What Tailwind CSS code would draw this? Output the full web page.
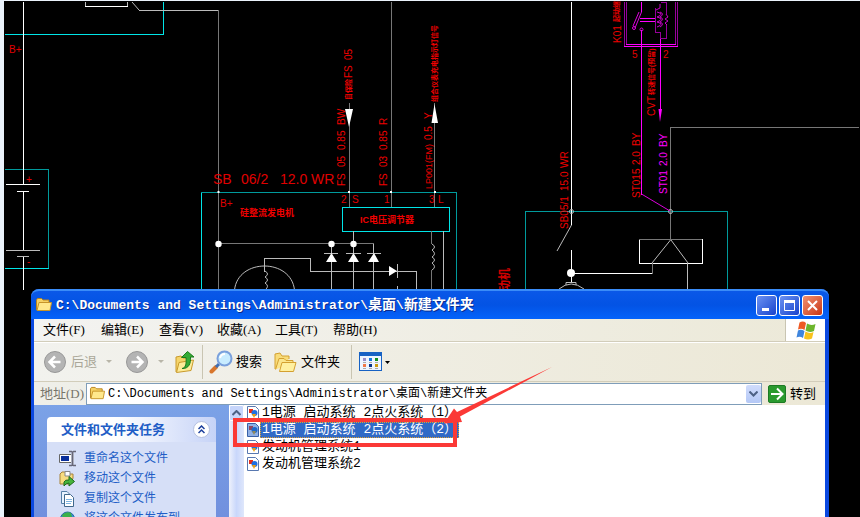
<!DOCTYPE html>
<html lang="zh-CN">
<head>
<meta charset="utf-8">
<title>新建文件夹</title>
<script src="https://cdn.jsdelivr.net/npm/@tailwindcss/browser@4"></script>
</head>
<body class="bg-[#eaf2fb]">
<main class="relative h-screen overflow-hidden font-['Liberation_Serif','Noto_Sans_CJK_SC',serif]">

<!-- Wiring diagram -->
<div class="h-full pl-1 pt-px"><div class="h-full bg-black"></div></div>
<svg class="absolute left-0 top-0 font-['Liberation_Sans','Noto_Sans_CJK_SC',sans-serif]" width="860" height="517" viewBox="0 0 860 517" fill="none" aria-label="电路图">
  <g shape-rendering="crispEdges">
    <g stroke="#00e5e8"><path d="M5 34.500H163.500V2M5 268.500H48.500M201.500 289V192.500M342.500 207.500H449.500V231.500H342.500Z"/></g>
    <g stroke="#009a9c"><path d="M5 169.500H48.500V268M201 192.500H456.500V289M525.500 289V211.500H727.500V289"/></g>
    <g stroke="#fff"><path d="M23.500 2V184M6 184.500H40M17 191.500H29M23.500 191V250M23.500 257V290M85 6.500H128M571.500 2V225M571.500 250V283M571 273.500H652M639.500 239.500H702.500V263.500H639.500Z"/></g>
    <g stroke="#bbb"><path d="M6 250.500H40M17 256.500H29M85.500 2V6M127.500 2V6M139 10.500H218M353.500 231V289M331.500 243V289M373.500 243V289M264.500 272V258.500H310.500V271.500H416.500V289M443.500 231V289M397.500 264V278M324 253.500H338M346 253.500H361M367 253.500H381M687.500 263V290M397.500 286V289"/></g>
    <g stroke="#777"><path d="M218.500 10V289M218 243.500H374M391.500 2V207M349.500 103V207M434.500 103V207M431.500 231V244M431.500 270V289M670.500 239V127.500H859M652.500 263V274M639 239.500H702"/></g>
    <g stroke="#f0f"><path d="M641.500 30V195M660.500 38V110M624 46.500H678M626 44.500H676M641.500 2V12M640 18.500H655M640 21.500H655"/></g>
    <g stroke="#96009a"><path d="M624.500 2V46M677.500 2V46M626.500 2V44M675.500 2V44M660.500 2.500H666.500V14M666.500 25V38.500H660M655.500 8V32H660V38"/></g>
  </g>
  <g stroke="#bbb">
    <path d="M132 2L139 10M571.500 225L557 251M670.500 240L652 263M671 240L688 263"/>
    <path d="M234.500 290C238 258 291 258 294.500 290M265 271q5 3 0 6q5 3 0 6q5 3 0 7M432 244q5 3 0 6q5 4 0 7q5 3 0 6q5 4 0 7M559 289Q571 279 584 289M566 285V282.500H576V285"/>
    <circle cx="571.500" cy="211.500" r="2"/><circle cx="670.500" cy="211.500" r="2"/>
  </g>
  <path d="M641.500 194L670 211M641.500 12L635 28M639 12L633 26" stroke="#d0d"/>
  <circle cx="634" cy="28" r="1.500" stroke="#d0d"/><circle cx="641.500" cy="29.500" r="1.500" stroke="#d0d"/>
  <path d="M660 4V8L656 10M657 12q8 2 0 5q8 2 0 5q8 2 0 5M660 12q5 2 0 5q5 2 0 5q5 2 0 5M666 14l2 3-3 2 3 2-3 2 2 2" stroke="#c0c"/>
  <path d="M658.500 109H662L660 122Z" fill="#f0f"/>
  <g fill="#fff">
    <circle cx="218.500" cy="244" r="3.200"/><circle cx="331.500" cy="244" r="3.200"/><circle cx="353.500" cy="244" r="3.200"/><circle cx="571" cy="273" r="4"/>
    <path d="M345 109H353L349 127ZM434.500 104L438 123H431.500ZM331.500 253L337 262H326ZM353.500 253L359 262H348ZM374 253L379 262H368ZM389 266L397 271L389 276Z"/>
    <path d="M217.500 191h2v2h-2zM348 191h2v2h-2zM390 191h2v2h-2zM434 191h2v2h-2z"/>
  </g>
  <g fill="#e00000" class="text-[14px]">
    <text x="213" y="184">SB</text><text x="241" y="184">06/2</text><text x="280" y="184">12.0</text><text x="311" y="184">WR</text>
  </g>
  <g fill="#e00000" class="text-[10px]">
    <text x="9" y="53">B+</text><text x="220" y="207">B+</text><text x="341" y="203">2</text><text x="352" y="203">S</text><text x="384" y="203">1</text><text x="429" y="203">3</text><text x="438" y="203">L</text><text x="26" y="183">+</text><text x="27" y="265">-</text>
    <text x="632" y="58">5</text><text x="663" y="58">2</text>
  </g>
  <g fill="#f00000" class="text-[9px] font-bold"><text x="240" y="216">硅整流发电机</text><text x="360" y="223">IC电压调节器</text></g>
  <g fill="#f00000" class="text-[10px]">
    <text transform="translate(345 186) rotate(-90)">FS</text><text transform="translate(345 167) rotate(-90)">05</text><text transform="translate(345 150) rotate(-90)">0.85</text><text transform="translate(345 125) rotate(-90)">BW</text>
    <text transform="translate(387 186) rotate(-90)">FS</text><text transform="translate(387 167) rotate(-90)">03</text><text transform="translate(387 150) rotate(-90)">0.85</text><text transform="translate(387 125) rotate(-90)">R</text>
    <text transform="translate(432 189) rotate(-90)" class="text-[9px]">LP001(FM)</text><text transform="translate(432 140) rotate(-90)">0.5</text><text transform="translate(432 119) rotate(-90)">Y</text>
    <text transform="translate(352 78) rotate(-90)">FS</text><text transform="translate(352 60) rotate(-90)">05</text>
    <text transform="translate(568 229) rotate(-90)">SB05/1</text><text transform="translate(568 191) rotate(-90)">15.0</text><text transform="translate(568 168) rotate(-90)">WR</text>
    <text transform="translate(640 198) rotate(-90)">ST015</text><text transform="translate(640 165) rotate(-90)">2.0</text><text transform="translate(640 146) rotate(-90)">BY</text>
    <text transform="translate(621 43) rotate(-90)">K01</text><text transform="translate(655 116) rotate(-90)">CVT</text>
  </g>
  <g fill="#f0f" class="text-[10px]">
    <text transform="translate(667 194) rotate(-90)">ST01</text><text transform="translate(667 166) rotate(-90)">2.0</text><text transform="translate(667 147) rotate(-90)">BY</text>
  </g>
  <g fill="#f00000" class="text-[7px] font-bold">
    <text transform="translate(351 100) rotate(-90)">自保险</text>
    <text transform="translate(437 102) rotate(-90)">组合仪表充电指示灯信号</text>
    <text transform="translate(654 95) rotate(-90)">转速信号(预留)</text>
    <text transform="translate(619 22) rotate(-90)">起动继</text>
  </g>
  <text transform="translate(509 304) rotate(-90)" fill="#d00000" class="text-[12px] font-bold">起动机</text>
</svg>

<!-- Explorer window -->
<section class="absolute inset-x-[31px] top-[289px] bottom-0 flex flex-col rounded-t-lg bg-[#0a48e0] pl-[3px] pr-1">
  <header class="-ml-[3px] -mr-1 flex h-[30px] shrink-0 items-center gap-[3px] rounded-t-lg bg-linear-to-b from-[#0a58e8] via-[#0353e4] to-[#0463fb] border-t-2 border-[#3a8cf8] pl-1 pr-1.5 text-white">
    <svg width="18" height="16" viewBox="0 0 18 16" aria-hidden="true"><path d="M1.500 13V3l1-1.500h4L8 3h6v3" fill="#f6d264" stroke="#b8831c"/><path d="M2 13.500L4 5.500h12.500L15 13.500Z" fill="#ffe88c" stroke="#c6942a"/></svg>
    <h1 class="flex-1 whitespace-nowrap font-['Liberation_Mono','Noto_Sans_CJK_SC',monospace] text-[13px] font-bold [text-shadow:1px_1px_#0a2b8c]">C:\Documents and Settings\Administrator\<span class="text-[14px]">桌面</span>\<span class="text-[14px]">新建文件夹</span></h1>
    <div class="flex gap-0.5">
      <button aria-label="最小化" class="grid size-[21px] place-items-center rounded-[3px] border border-white bg-linear-to-br from-[#6d92f2] to-[#1941cc]"><svg width="17" height="17"><path d="M4 12.500H11" stroke="#fff" stroke-width="3"/></svg></button>
      <button aria-label="最大化" class="grid size-[21px] place-items-center rounded-[3px] border border-white bg-linear-to-br from-[#6d92f2] to-[#1941cc]"><svg width="17" height="17" fill="none" stroke="#fff"><path d="M3.500 4V13.500H13.500V4"/><path d="M3 4.500H14" stroke-width="3"/></svg></button>
      <button aria-label="关闭" class="grid size-[21px] place-items-center rounded-[3px] border border-white bg-linear-to-br from-[#f09070] to-[#c8320c]"><svg width="17" height="17"><path d="M4 4L13 13M13 4L4 13" stroke="#fff" stroke-width="2"/></svg></button>
    </div>
  </header>

  <nav class="flex h-[23px] shrink-0 border-b border-[#d2cdba] bg-linear-to-r from-[#f3f3f1] to-[#ece9d8] text-[13px] text-black" aria-label="菜单">
    <div class="flex flex-1 items-center gap-4 whitespace-nowrap pl-[9px]">
      <button class="w-[42px] text-left">文件(F)</button><button class="w-[42px] text-left">编辑(E)</button><button class="w-[42px] text-left">查看(V)</button><button class="w-[42px] text-left">收藏(A)</button><button class="w-[42px] text-left">工具(T)</button><button class="w-[42px] text-left">帮助(H)</button>
    </div>
    <div class="grid w-10 place-items-center border-l border-[#c9c5b2] bg-white">
      <svg width="20" height="19" viewBox="0 0 20 19" aria-hidden="true"><path d="M3.500 1.500Q7-.5 10 2L8.500 9Q5.500 7 2 8.500Z" fill="#ee5a24"/><path d="M11 2.500Q15 5 19.500 3L18 10Q13.500 12 9.500 9.500Z" fill="#6cb52d"/><path d="M2 9.500Q5 8 8.500 10L7 17Q4 15 .5 16.500Z" fill="#3f85dd"/><path d="M9.500 10.500Q13.500 13 17.500 11L16 17.500Q12 19.500 8 17.500Z" fill="#f8c21c"/></svg>
    </div>
  </nav>

  <div class="flex h-10 shrink-0 items-center border-y border-t-white border-b-[#d2cdba] bg-linear-to-r from-[#f2f2ee] to-[#ece8d6] text-[13px]" role="toolbar" aria-label="工具栏">
    <button class="ml-[9px] flex items-center gap-1 text-[#aaa799]" disabled>
      <svg width="24" height="24" viewBox="0 0 24 24" fill="none"><circle cx="12" cy="12" r="10.500" fill="#b4b4b4" stroke="#989898"/><path d="M17.500 12H7M12 6.500L6.500 12L12 17.500" stroke="#fff" stroke-width="2.500"/></svg>
      后退
    </button>
    <svg class="ml-[9px]" width="6" height="4" aria-hidden="true"><path d="M0 0H6L3 3Z" fill="#b8b5a8"/></svg>
    <button class="ml-[13px]" aria-label="前进" disabled><svg width="24" height="24" viewBox="0 0 24 24" fill="none"><circle cx="12" cy="12" r="10.500" fill="#b4b4b4" stroke="#989898"/><path d="M6.500 12H17M12 6.500L17.500 12L12 17.500" stroke="#fff" stroke-width="2.500"/></svg></button>
    <svg class="ml-[9px]" width="6" height="4" aria-hidden="true"><path d="M0 0H6L3 3Z" fill="#b8b5a8"/></svg>
    <button class="ml-[11px]" aria-label="向上"><svg width="20" height="23" viewBox="0 0 20 23"><path d="M1 21V6l5-1 2 2h6v5" fill="#f5d56a" stroke="#c99a2c"/><path d="M1.500 21.500L4 11.500L18.500 9L16 19.500Z" fill="#fdeb98" stroke="#c99a2c"/><path d="M7 17.500C11 17 11.500 12 11 6.500H6.500L12.500.5L19 6H15.500C16 12 14 18 7 17.500Z" fill="#35ab35" stroke="#1c7a1c"/></svg></button>
    <div class="ml-[7px] h-[34px] w-px bg-[#c9c5b2]"></div>
    <button class="ml-1.5 flex items-center gap-[3px]"><svg width="24" height="24" viewBox="0 0 24 24"><path d="M2.500 21.500L7 17" stroke="#d8762c" stroke-width="4" stroke-linecap="round"/><path d="M7 17L10 14" stroke="#3f6fb4" stroke-width="3"/><circle cx="15.500" cy="8.500" r="7" fill="#c8ecff" stroke="#7aa0dc" stroke-width="2"/><path d="M11 8Q12 4 16 4" stroke="#fff" stroke-width="2" fill="none"/></svg>搜索</button>
    <button class="ml-3 flex items-center gap-1"><svg width="23" height="21" viewBox="0 0 23 21"><path d="M1 17V2l5-1 2 3h7v3" fill="#f8dc7a" stroke="#d4a030"/><path d="M1.500 17.500L5 6.500H10L12 8.500H19V11" fill="#fbe58c" stroke="#d4a030"/><path d="M5.500 19.500L8 10.500H22L19.500 19.500Z" fill="#fff0a0" stroke="#d4a030"/></svg>文件夹</button>
    <div class="ml-[11px] h-[34px] w-px bg-[#c9c5b2]"></div>
    <button class="ml-[7px] flex items-center gap-[3px]" aria-label="查看方式"><svg width="23" height="20" viewBox="0 0 23 20"><rect x=".5" y=".5" width="22" height="18" fill="#eef5ff" stroke="#1762c4"/><path d="M0 2H23" stroke="#1762c4" stroke-width="4"/><path d="M4 6h3v3H4z" fill="#998cc8"/><path d="M10 6h3v3h-3z" fill="#1678e0"/><path d="M16 6h3v3h-3z" fill="#129020"/><path d="M4 12h3v3H4z" fill="#f07848"/><path d="M10 12h3v3h-3z" fill="#08358c"/><path d="M16 12h3v3h-3z" fill="#cc9c10"/><path d="M4 10.500h3m3 0h3m3 0h3M4 16.500h3m3 0h3m3 0h3" stroke="#aaa"/></svg><svg width="5" height="3"><path d="M0 0H5L2.500 3Z" fill="#000"/></svg></button>
  </div>

  <form class="flex h-[23px] shrink-0 items-center bg-linear-to-r from-[#efefe9] to-[#ece8d6] text-[13px]" onsubmit="return false">
    <label for="addr" class="w-[52px] shrink-0 whitespace-nowrap pl-1.5 text-[#77756b]">地址(D)</label>
    <div class="flex h-[22px] min-w-0 flex-1 items-center gap-0.5 border border-[#7f9db9] bg-white pl-0.5">
      <svg width="17" height="15" viewBox="0 0 18 16" aria-hidden="true"><path d="M1.500 13V3l1-1.500h4L8 3h6v3" fill="#f6d264" stroke="#b8831c"/><path d="M2 13.500L4 5.500h12.500L15 13.500Z" fill="#ffe88c" stroke="#c6942a"/></svg>
      <input id="addr" class="min-w-0 flex-1 font-['Liberation_Mono','Noto_Sans_CJK_SC',monospace] text-[12px] text-black outline-none" value="C:\Documents and Settings\Administrator\桌面\新建文件夹">
      <button type="button" aria-label="展开" class="grid h-[18px] w-[15px] place-items-center rounded-[2px] bg-linear-to-b from-[#d0dcfc] to-[#b4c8f6]"><svg width="9" height="6"><path d="M.5 .5L4.500 4.500L8.500 .5" fill="none" stroke="#4d6185" stroke-width="2"/></svg></button>
    </div>
    <button class="ml-1.5 flex w-[57px] items-center gap-1 whitespace-nowrap text-black"><svg width="18" height="18" viewBox="0 0 18 18"><rect x=".5" y=".5" width="17" height="17" rx="1.500" fill="#2a9a2e" stroke="#1d7a24"/><path d="M3 9H14M9 3.500L14.500 9L9 14.500" fill="none" stroke="#fff" stroke-width="2"/></svg>转到</button>
  </form>

  <div class="flex min-h-0 flex-1 bg-white">
    <aside class="w-[195px] shrink-0 overflow-hidden bg-linear-to-b from-[#7ba2e7] to-[#7190de] px-[13px] pt-3">
      <h2 class="flex h-[25px] items-center justify-between rounded-t-[4px] bg-linear-to-r from-white from-40% to-[#c6d3f7] pl-3.5 pr-1.5 text-[13px] font-bold text-[#215dc6]">文件和文件夹任务
        <button aria-label="折叠" class="grid size-[17px] place-items-center rounded-full border border-[#b4c0e0] bg-white"><svg width="7" height="9" fill="none" stroke="#1c3f9c" stroke-width="1.500"><path d="M.5 4L3.500 1L6.500 4M.5 8L3.500 5L6.500 8"/></svg></button>
      </h2>
      <ul class="h-28 bg-[#d6dff7] pl-3 pt-1.5 text-[12px] text-[#215dc6]">
        <li class="h-5"><a href="#" class="flex h-5 items-center gap-2"><svg width="17" height="17" viewBox="0 0 17 17"><path d="M.5 4.500H12.500V12.500H.5Z" fill="#fff" stroke="#666"/><path d="M2 6h8v5H2z" fill="#0a2f9c"/><path d="M12 3h3v11h-3z" fill="#c4c8d4"/><path d="M10 1.500H12.500L13.500 2.500L14.500 1.500H17M13.500 2V14M10 15.500H12.500L13.500 14.500L14.500 15.500H17" fill="none" stroke="#667" stroke-width="1.500"/></svg>重命名这个文件</a></li>
        <li class="h-5"><a href="#" class="flex h-5 items-center gap-2"><svg width="17" height="17" viewBox="0 0 17 17"><path d="M1 14V4L3 2H7L9 4H14V8L12 14Z" fill="#f8dc80" stroke="#a8823a"/><path d="M6 1.500H11V6H6Z" fill="#fff" stroke="#888"/><path d="M5 16V12Q6 9.500 10 10V6.500L15.500 11.500L10 16V13Q7 13 5 16Z" fill="#46b43c" stroke="#1c6a1c"/></svg>移动这个文件</a></li>
        <li class="h-5"><a href="#" class="flex h-5 items-center gap-2"><svg width="17" height="17" viewBox="0 0 17 17"><path d="M2.500 1.500H8L10.500 4V13.500H2.500Z" fill="#e8f3ff" stroke="#5580a8"/><path d="M5.500 4.500H11.500L14.500 7.500V16.500H5.500Z" fill="#fff" stroke="#40688c"/><path d="M7 9.500H13M7 11.500H13M7 13.500H12" stroke="#7eb4e0"/></svg>复制这个文件</a></li>
        <li class="h-5"><a href="#" class="flex h-5 items-center gap-2 whitespace-nowrap"><svg width="17" height="17" viewBox="0 0 17 17"><circle cx="8.500" cy="9" r="7" fill="#3a8cd8" stroke="#2868a0"/><path d="M3 5Q7 1 12 3L13 7L9 9L6 7L4 9Z" fill="#3cb04a"/></svg>将这个文件发布到</a></li>
      </ul>
    </aside>
    <div class="w-[15px] shrink-0 bg-linear-to-r from-[#eef1fb] via-[#c9d7fb] to-[#dfe7fb]" aria-hidden="true">
      <div class="grid h-4 place-items-center rounded-[2px] border border-white bg-[#c6d5fb]"><svg width="9" height="6"><path d="M.5 5L4.500 1L8.500 5" fill="none" stroke="#4d6185" stroke-width="2"/></svg></div>
    </div>
    <div class="min-w-0 flex-1 overflow-hidden pl-0.5">
      <ul class="-mt-px font-['Liberation_Mono','Noto_Sans_CJK_SC',monospace] text-[13px] text-black">
        <li><button class="flex h-[17px] items-center whitespace-nowrap"><svg width="14" height="16" viewBox="0 0 14 16"><path d="M1.500 1.500H9.500L12.500 4.500V14.500H1.500Z" fill="#fff" stroke="#5878b0"/><path d="M3 4h4v4H3z" fill="#e83018"/><circle cx="8.500" cy="8" r="3" fill="#2070e0"/><path d="M6 9H10L8 13Z" fill="#f0a010"/></svg><span class="px-0.5 leading-4">1电源 启动系统 2点火系统（1）</span></button></li>
        <li><button class="flex h-[17px] items-center whitespace-nowrap"><svg width="14" height="16" viewBox="0 0 14 16"><path d="M1.500 1.500H9.500L12.500 4.500V14.500H1.500Z" fill="#90b0e4" stroke="#3860a8"/><path d="M3 4h4v4H3z" fill="#904460"/><circle cx="8.500" cy="8" r="3" fill="#2068c8"/><path d="M6 9H10L8 13Z" fill="#90885c"/></svg><span class="bg-[#316ac6] px-0.5 leading-4 text-white outline-1 -outline-offset-1 outline-dotted outline-[#e0a030]">1电源 启动系统 2点火系统（2）</span></button></li>
        <li><button class="flex h-[17px] items-center whitespace-nowrap"><svg width="14" height="16" viewBox="0 0 14 16"><path d="M1.500 1.500H9.500L12.500 4.500V14.500H1.500Z" fill="#fff" stroke="#5878b0"/><path d="M3 4h4v4H3z" fill="#e83018"/><circle cx="8.500" cy="8" r="3" fill="#2070e0"/><path d="M6 9H10L8 13Z" fill="#f0a010"/></svg><span class="px-0.5 leading-4">发动机管理系统1</span></button></li>
        <li><button class="flex h-[17px] items-center whitespace-nowrap"><svg width="14" height="16" viewBox="0 0 14 16"><path d="M1.500 1.500H9.500L12.500 4.500V14.500H1.500Z" fill="#fff" stroke="#5878b0"/><path d="M3 4h4v4H3z" fill="#e83018"/><circle cx="8.500" cy="8" r="3" fill="#2070e0"/><path d="M6 9H10L8 13Z" fill="#f0a010"/></svg><span class="px-0.5 leading-4">发动机管理系统2</span></button></li>
      </ul>
    </div>
  </div>
</section>

<!-- Red callout -->
<svg class="pointer-events-none absolute left-0 top-0" width="860" height="517" viewBox="0 0 860 517" aria-hidden="true"><path d="M235 420H455V445H235Z" fill="none" stroke="#fb3936" stroke-width="4"/><path d="M444 423.500L454 408.500L457 412L552 367L460 416.500L462 422Z" fill="#fb3936"/></svg>
</main>
</body>
</html>
